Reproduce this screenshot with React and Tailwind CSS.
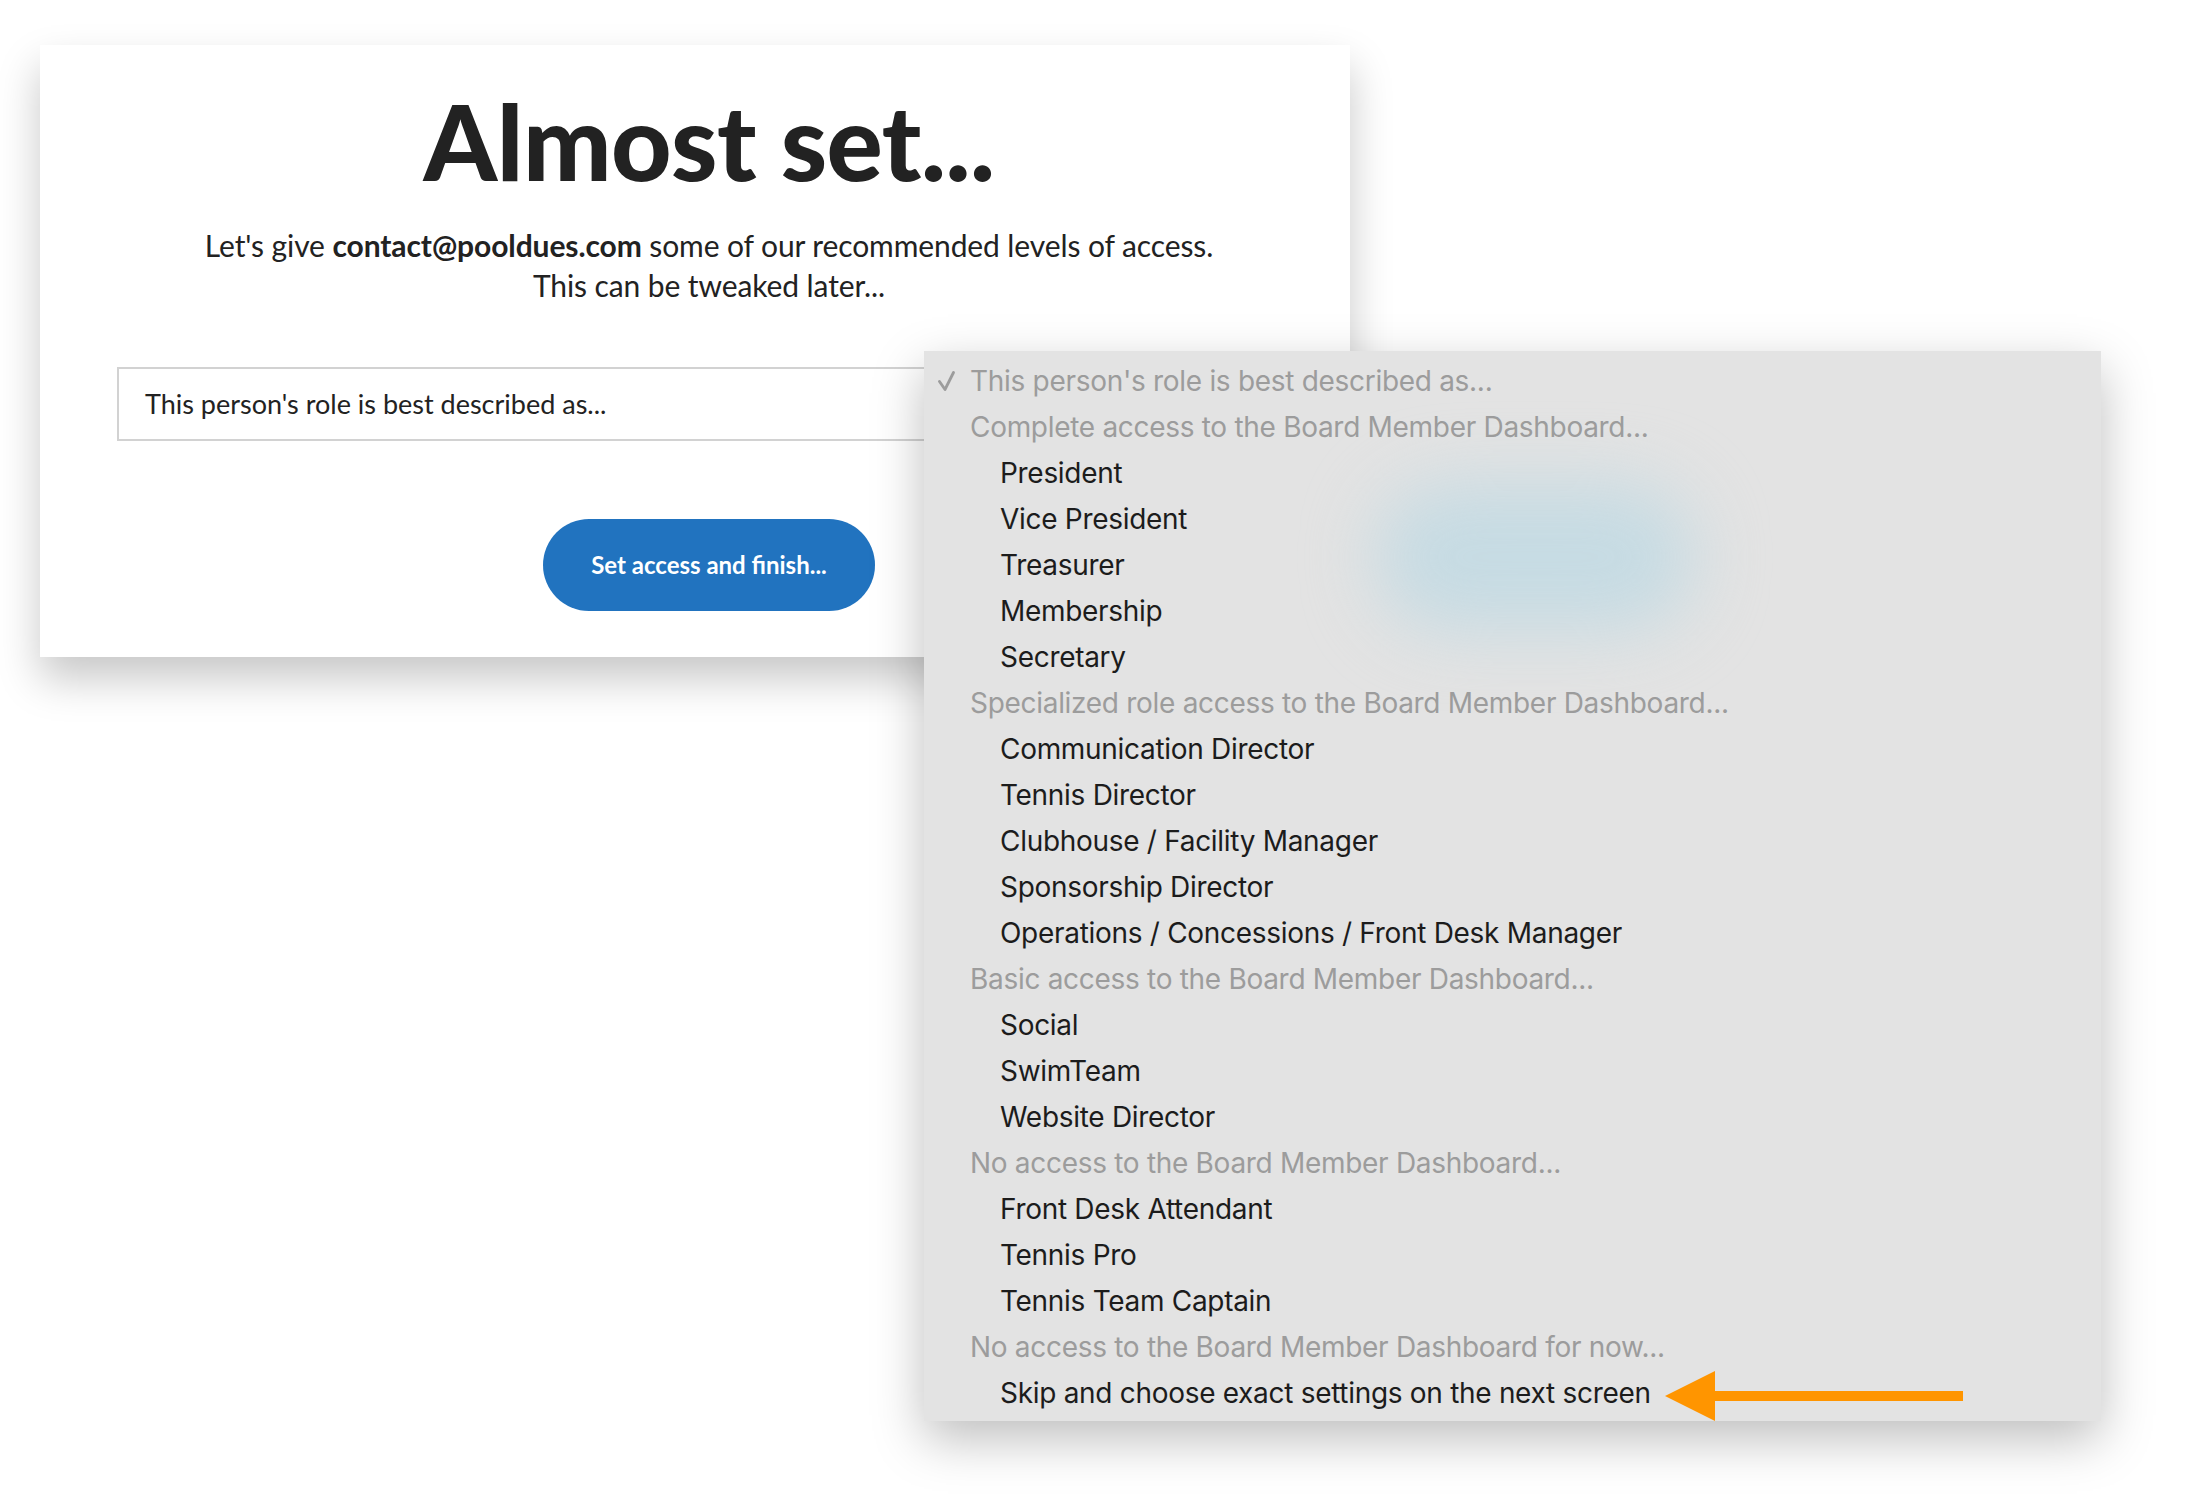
import React from "react";

const groups = [
  {
    header: "Complete access to the Board Member Dashboard...",
    items: ["President", "Vice President", "Treasurer", "Membership", "Secretary"],
  },
  {
    header: "Specialized role access to the Board Member Dashboard...",
    items: [
      "Communication Director",
      "Tennis Director",
      "Clubhouse / Facility Manager",
      "Sponsorship Director",
      "Operations / Concessions / Front Desk Manager",
    ],
  },
  {
    header: "Basic access to the Board Member Dashboard...",
    items: ["Social", "SwimTeam", "Website Director"],
  },
  {
    header: "No access to the Board Member Dashboard...",
    items: ["Front Desk Attendant", "Tennis Pro", "Tennis Team Captain"],
  },
  {
    header: "No access to the Board Member Dashboard for now...",
    items: ["Skip and choose exact settings on the next screen"],
  },
];

export default function App() {
  return (
    <div className="relative w-[2211px] h-[1506px] bg-white overflow-hidden">
      {/* Card */}
      <div className="ml-[40px] pt-[45px]">
        <div className="w-[1310px] h-[612px] bg-white shadow-[0_22px_40px_rgba(0,0,0,0.22)] pl-[28px] font-['Lato',sans-serif] text-[#222]">
          <div className="flex flex-col items-center pt-[43px]">
            <h1 className="text-[105px] leading-none font-black tracking-[-0.5px]">Almost set...</h1>
            <p className="mt-[32px] text-[30px] leading-[40px] tracking-[-0.1px] text-center">
              Let's give <span className="font-bold">contact@pooldues.com</span> some of our recommended levels of access.
              <br />
              This can be tweaked later...
            </p>
            <div className="mt-[62px] w-[1184px] h-[74px] border-2 border-[#d2d2d2] flex items-center pl-[26px] text-[27px]">
              This person's role is best described as...
            </div>
            <button className="mt-[78px] w-[332px] h-[92px] rounded-full bg-[#2173bf] text-white text-[24px] font-bold flex items-center justify-center">
              Set access and finish...
            </button>
          </div>
        </div>
      </div>

      {/* Dropdown */}
      <div className="absolute left-[924px] top-[351px] w-[1177px] h-[1070px] bg-[#e3e3e3] shadow-[0_18px_48px_rgba(0,0,0,0.26)] pt-[7px] font-['Inter',sans-serif] text-[28px] tracking-[-0.3px] overflow-hidden">
        <div className="absolute left-[451px] top-[132px] w-[320px] h-[148px] rounded-full bg-[#c6dbe3] blur-[34px]"></div>
        <div className="relative flex flex-col">
          <div className="h-[46px] leading-[46px] flex items-center text-[#9c9c9c]">
            <span className="w-[46px] pl-[14px] flex items-center">
              <svg width="17" height="20" viewBox="0 0 17 20">
                <polyline
                  points="1.5,10.5 7,18.5 15.5,1.5"
                  fill="none"
                  stroke="#9c9c9c"
                  strokeWidth="2.8"
                  strokeLinecap="round"
                  strokeLinejoin="round"
                />
              </svg>
            </span>
            <span>This person's role is best described as...</span>
          </div>
          {groups.map((g) => (
            <React.Fragment key={g.header}>
              <div className="h-[46px] leading-[46px] pl-[46px] text-[#9c9c9c]">{g.header}</div>
              {g.items.map((it) => (
                <div key={it} className="h-[46px] leading-[46px] pl-[76px] text-[#1c1c1c]">
                  {it}
                </div>
              ))}
            </React.Fragment>
          ))}
        </div>
      </div>

      {/* Arrow */}
      <svg
        className="absolute left-[1660px] top-[1366px]"
        width="310"
        height="60"
        viewBox="0 0 310 60"
      >
        <polygon points="5,30 55,5 55,55" fill="#ff9500" />
        <rect x="54" y="25" width="249" height="10" fill="#ff9500" />
      </svg>
    </div>
  );
}
